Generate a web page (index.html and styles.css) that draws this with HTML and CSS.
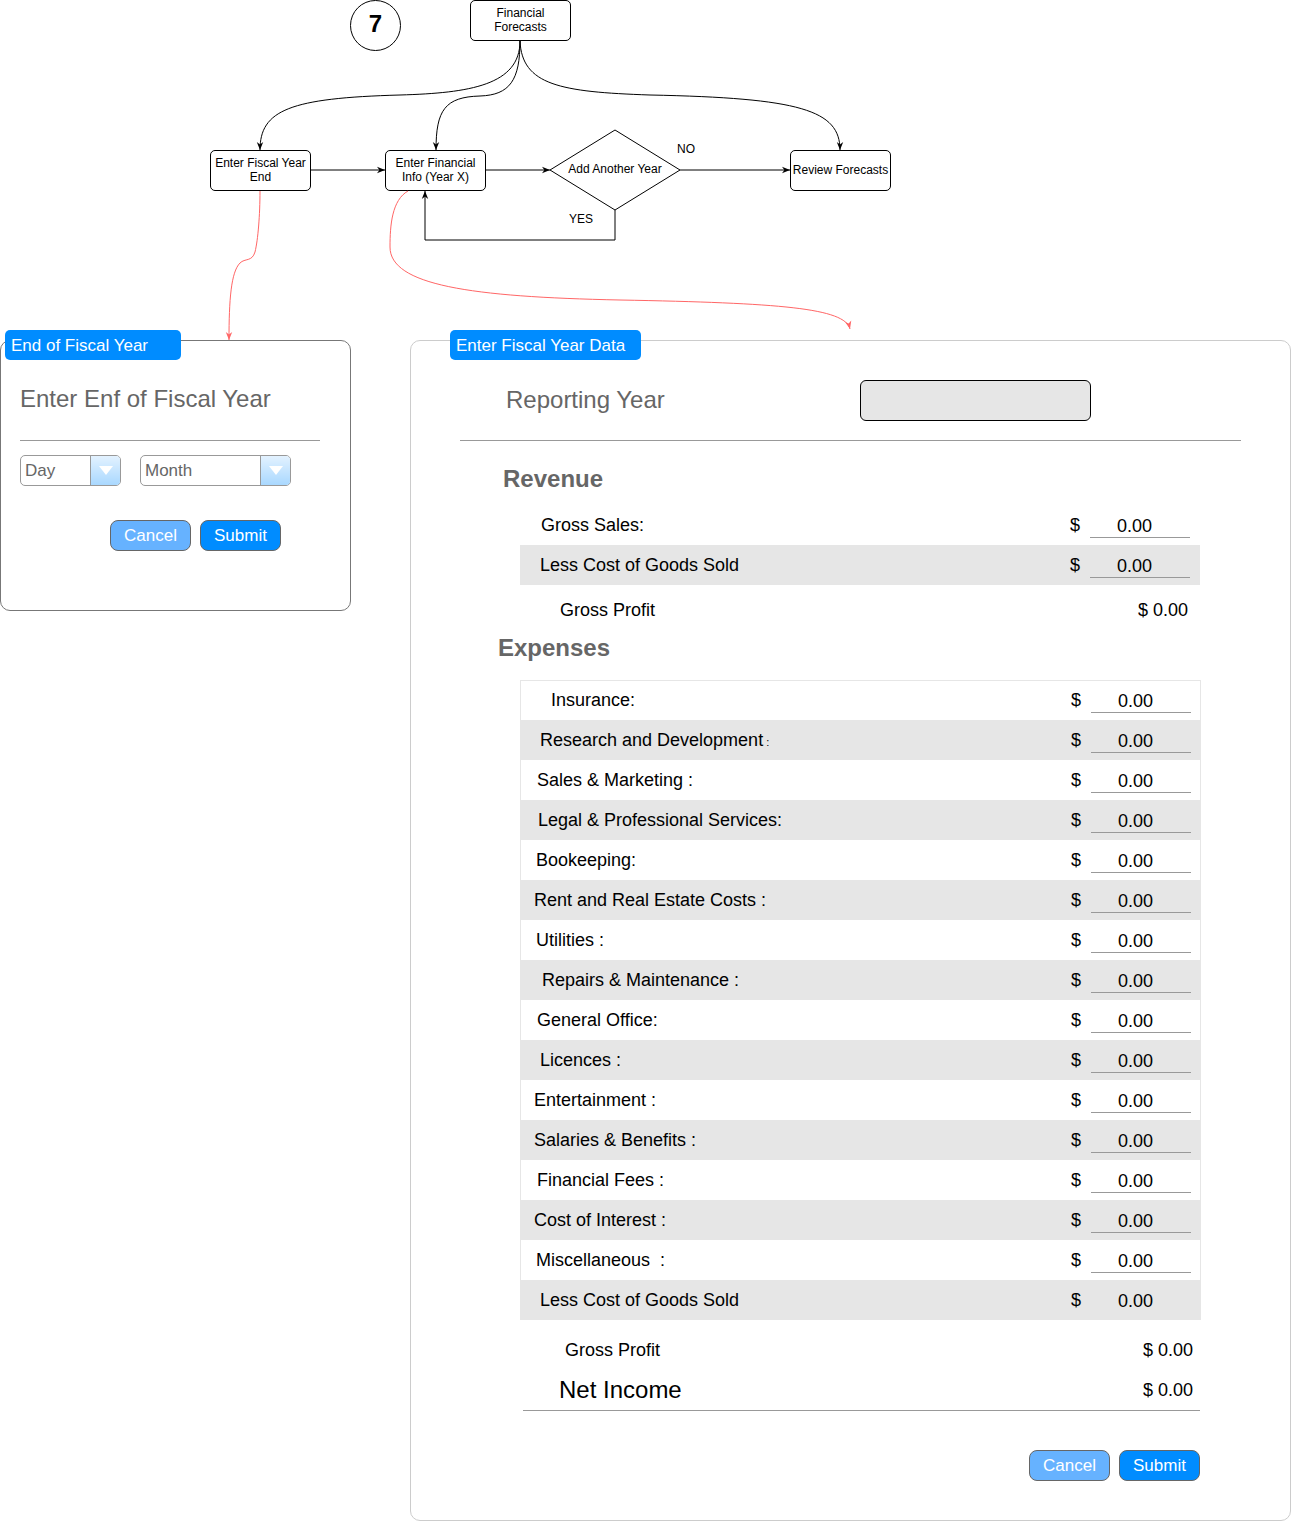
FILE: index.html
```html
<!DOCTYPE html>
<html lang="en">
<head>
<meta charset="utf-8">
<title>Financial Forecasts</title>
<link rel="stylesheet" href="styles.css">
</head>
<body>
<div class="page">
  <div class="diagram">
    <svg class="edges" width="1292" height="340" viewBox="0 0 1292 340">
      <defs>
        <marker id="ab" viewBox="0 0 10 10" refX="10" refY="5" markerWidth="8" markerHeight="8" markerUnits="userSpaceOnUse" orient="auto">
          <path d="M0,1 L10,5 L0,9 L3,5 z" fill="#000"/>
        </marker>
        <marker id="ar" viewBox="0 0 10 10" refX="10" refY="5" markerWidth="8" markerHeight="8" markerUnits="userSpaceOnUse" orient="auto">
          <path d="M0,1 L10,5 L0,9 L3,5 z" fill="#ff6666"/>
        </marker>
      </defs>
      <g fill="none" stroke="#000" stroke-width="1">
        <path d="M520,41 C520,85 470,93 400,95 C290,98 260,110 260,150" marker-end="url(#ab)"/>
        <path d="M520,41 C520,80 510,95 480,96 C445,97 436,110 436,150" marker-end="url(#ab)"/>
        <path d="M520,41 C522,85 560,92 650,95 C800,98 840,110 840,150" marker-end="url(#ab)"/>
        <path d="M311,170 L385,170" marker-end="url(#ab)"/>
        <path d="M486,170 L550,170" marker-end="url(#ab)"/>
        <path d="M680,170 L790,170" marker-end="url(#ab)"/>
        <polygon points="550,170 615,130 680,170 615,210" fill="#fff"/>
        <path d="M615,210 L615,240 L425,240 L425,191" marker-end="url(#ab)"/>
      </g>
      <g fill="none" stroke="#ff6666" stroke-width="1">
        <path d="M260,191 C260,215 258,240 255,252 C252,262 245,258 240,263 C231,272 229,300 229,340" marker-end="url(#ar)"/>
        <path d="M408,191 C392,200 390,225 390,247 C390,285 470,297 620,300 C780,303 845,308 850,329" marker-end="url(#ar)"/>
      </g>
    </svg>
    <div class="step">7</div>
    <div class="node n-ff">Financial<br>Forecasts</div>
    <div class="node n-fye">Enter Fiscal Year<br>End</div>
    <div class="node n-efi">Enter Financial<br>Info (Year X)</div>
    <div class="decision-label">Add Another Year</div>
    <div class="edge-label l-no">NO</div>
    <div class="edge-label l-yes">YES</div>
    <div class="node n-rf">Review Forecasts</div>
  </div>

  <div class="panels">
    <section class="panel panel-left">
      <div class="tab tab-left">End of Fiscal Year</div>
      <h2 class="panel-title">Enter Enf of Fiscal Year</h2>
      <div class="rule"></div>
      <div class="selects">
        <div class="select sel-day"><span class="sel-text">Day</span><span class="caret"></span></div>
        <div class="select sel-month"><span class="sel-text">Month</span><span class="caret"></span></div>
      </div>
      <div class="actions actions-left">
        <div class="btn btn-cancel">Cancel</div>
        <div class="btn btn-submit">Submit</div>
      </div>
    </section>

    <section class="panel panel-right">
      <div class="tab tab-right">Enter Fiscal Year Data</div>
      <div class="report-row">
        <h2 class="report-title">Reporting Year</h2>
        <div class="year-input"></div>
      </div>
      <div class="rule-wide"></div>

      <h3 class="section-title sec-revenue">Revenue</h3>
      <div class="rev-rows">
        <div class="row"><span class="label pad-21">Gross Sales:</span><span class="cur">$</span><span class="val">0.00</span></div>
        <div class="row alt"><span class="label pad-20">Less Cost of Goods Sold</span><span class="cur">$</span><span class="val">0.00</span></div>
        <div class="total-row"><span>Gross Profit</span><span>$ 0.00</span></div>
      </div>

      <h3 class="section-title sec-expenses">Expenses</h3>
      <div class="exp-table">
        <div class="row"><span class="label pad-31">Insurance:</span><span class="cur">$</span><span class="val">0.00</span></div>
        <div class="row alt"><span class="label pad-20">Research and Development<span class="small-colon"> :</span></span><span class="cur">$</span><span class="val">0.00</span></div>
        <div class="row"><span class="label pad-17">Sales &amp; Marketing :</span><span class="cur">$</span><span class="val">0.00</span></div>
        <div class="row alt"><span class="label pad-18">Legal &amp; Professional Services:</span><span class="cur">$</span><span class="val">0.00</span></div>
        <div class="row"><span class="label">Bookeeping:</span><span class="cur">$</span><span class="val">0.00</span></div>
        <div class="row alt"><span class="label pad-14">Rent and Real Estate Costs :</span><span class="cur">$</span><span class="val">0.00</span></div>
        <div class="row"><span class="label">Utilities :</span><span class="cur">$</span><span class="val">0.00</span></div>
        <div class="row alt"><span class="label pad-22">Repairs &amp; Maintenance :</span><span class="cur">$</span><span class="val">0.00</span></div>
        <div class="row"><span class="label pad-17">General Office:</span><span class="cur">$</span><span class="val">0.00</span></div>
        <div class="row alt"><span class="label pad-20">Licences :</span><span class="cur">$</span><span class="val">0.00</span></div>
        <div class="row"><span class="label pad-14">Entertainment :</span><span class="cur">$</span><span class="val">0.00</span></div>
        <div class="row alt"><span class="label pad-14">Salaries &amp; Benefits :</span><span class="cur">$</span><span class="val">0.00</span></div>
        <div class="row"><span class="label pad-17">Financial Fees :</span><span class="cur">$</span><span class="val">0.00</span></div>
        <div class="row alt"><span class="label pad-14">Cost of Interest :</span><span class="cur">$</span><span class="val">0.00</span></div>
        <div class="row"><span class="label">Miscellaneous &nbsp;:</span><span class="cur">$</span><span class="val">0.00</span></div>
        <div class="row alt"><span class="label pad-20">Less Cost of Goods Sold</span><span class="cur">$</span><span class="val plain">0.00</span></div>
      </div>

      <div class="summary">
        <div class="sum-row"><span class="sum-label">Gross Profit</span><span>$ 0.00</span></div>
        <div class="sum-row net"><span class="net-label">Net Income</span><span>$ 0.00</span></div>
      </div>
      <div class="rule-bottom"></div>

      <div class="actions actions-right">
        <div class="btn btn-cancel">Cancel</div>
        <div class="btn btn-submit">Submit</div>
      </div>
    </section>
  </div>
</div>
</body>
</html>
```

FILE: styles.css
```css
* { box-sizing: border-box; }

body {
  margin: 0;
  font-family: "Liberation Sans", Arial, Helvetica, sans-serif;
  color: #000;
  background: #fff;
}

.page {
  width: 1292px;
  height: 1522px;
  position: relative;
}

/* ---------- diagram ---------- */
.diagram {
  position: relative;
  height: 340px;
}

.edges {
  position: absolute;
  left: 0;
  top: 0;
  z-index: 3;
  overflow: visible;
  pointer-events: none;
}

.node {
  position: absolute;
  z-index: 2;
  width: 101px;
  height: 41px;
  padding-bottom: 2px;
  border: 1px solid #000;
  border-radius: 5px;
  background: #fff;
  display: flex;
  align-items: center;
  justify-content: center;
  text-align: center;
  font-size: 12px;
  line-height: 14px;
}

.n-ff { left: 470px; top: 0; }
.n-fye { left: 210px; top: 150px; }
.n-efi { left: 385px; top: 150px; }
.n-rf { left: 790px; top: 150px; }

.step {
  position: absolute;
  left: 350px;
  top: 0;
  width: 51px;
  height: 51px;
  padding-bottom: 3px;
  border: 1px solid #000;
  border-radius: 50%;
  display: flex;
  align-items: center;
  justify-content: center;
  font-size: 24px;
  font-weight: bold;
}

.decision-label {
  position: absolute;
  z-index: 4;
  left: 550px;
  top: 159px;
  width: 130px;
  text-align: center;
  font-size: 12px;
  line-height: 20px;
}

.edge-label {
  position: absolute;
  z-index: 4;
  font-size: 12px;
  line-height: 14px;
}

.l-no { left: 677px; top: 142px; }
.l-yes { left: 569px; top: 212px; }

/* ---------- panels ---------- */
.panels {
  display: flex;
  align-items: flex-start;
  gap: 59px;
}

.panel {
  position: relative;
  background: #fff;
  border-radius: 10px;
}

.tab {
  position: absolute;
  top: -11px;
  height: 30px;
  background: #008cff;
  border-radius: 5px;
  color: #fff;
  font-size: 17px;
  line-height: 28px;
  padding: 2px 0 0 6px;
  z-index: 2;
}

.tab-left { left: 4px; width: 176px; }
.tab-right { left: 39px; width: 191px; }

.panel-left {
  width: 351px;
  height: 271px;
  border: 1px solid #777;
  padding: 0 30px 0 19px;
}

.panel-title {
  margin: 44px 0 0;
  font-size: 24px;
  font-weight: normal;
  line-height: 28px;
  color: #666;
}

.rule {
  width: 300px;
  height: 1px;
  margin-top: 27px;
  background: #999;
}

.selects {
  display: flex;
  gap: 19px;
  margin-top: 14px;
}

.select {
  height: 31px;
  border: 1px solid #999;
  border-radius: 5px;
  display: flex;
  overflow: hidden;
  font-size: 17px;
  color: #666;
  background: #fff;
}

.sel-day { width: 101px; }
.sel-month { width: 151px; }

.sel-text {
  flex: 1;
  padding-left: 4px;
  line-height: 29px;
}

.caret {
  width: 30px;
  border-left: 1px solid #999;
  background: linear-gradient(#e3f2ff, #a9d8ff);
  display: flex;
  align-items: center;
  justify-content: center;
}

.caret::after {
  content: "";
  width: 0;
  height: 0;
  border-left: 7px solid transparent;
  border-right: 7px solid transparent;
  border-top: 9px solid #fff;
}

.actions {
  display: flex;
  gap: 9px;
}

.actions-left {
  margin-top: 34px;
  padding-left: 90px;
}

.btn {
  width: 81px;
  height: 31px;
  border: 1px solid #666;
  border-radius: 8px;
  color: #fff;
  font-size: 17px;
  line-height: 29px;
  text-align: center;
}

.btn-cancel { background: #66b2ff; }
.btn-submit { background: #008cff; }

/* ---------- right panel ---------- */
.panel-right {
  width: 881px;
  height: 1181px;
  border: 1px solid #ccc;
}

.report-row {
  display: flex;
  align-items: center;
  height: 41px;
  margin-top: 39px;
  padding-left: 95px;
}

.report-title {
  margin: 0 0 2px;
  width: 354px;
  font-size: 24px;
  font-weight: normal;
  line-height: 28px;
  color: #666;
}

.year-input {
  width: 231px;
  height: 41px;
  background: #e6e6e6;
  border: 1px solid #000;
  border-radius: 6px;
}

.rule-wide {
  width: 781px;
  height: 1px;
  margin: 19px 0 0 49px;
  background: #999;
}

.section-title {
  margin: 0;
  font-size: 24px;
  font-weight: bold;
  line-height: 28px;
  color: #666;
}

.sec-revenue { margin-top: 24px; padding-left: 92px; }
.sec-expenses { margin-top: 4px; padding-left: 87px; }

.rev-rows {
  width: 680px;
  margin: 12px 0 0 109px;
}

.exp-table {
  width: 681px;
  margin: 18px 0 0 109px;
  outline: 1px solid #e6e6e6;
  outline-offset: -1px;
}

.row {
  display: flex;
  align-items: center;
  height: 40px;
  font-size: 18px;
  padding-right: 10px;
}

.row.alt { background: #e6e6e6; }

.label {
  flex: 1;
  padding-left: 16px;
  white-space: nowrap;
}

.pad-14 { padding-left: 14px; }
.pad-17 { padding-left: 17px; }
.pad-18 { padding-left: 18px; }
.pad-20 { padding-left: 20px; }
.pad-21 { padding-left: 21px; }
.pad-22 { padding-left: 22px; }
.pad-31 { padding-left: 31px; }

.small-colon { font-size: 11px; }

.cur {
  width: 10px;
  margin-right: 10px;
}

.val {
  width: 100px;
  height: 23px;
  line-height: 22px;
  padding-right: 11px;
  text-align: center;
  border-bottom: 1px solid #999;
  margin-top: 2px;
}

.val.plain { border-bottom-color: transparent; }

.total-row {
  display: flex;
  justify-content: space-between;
  align-items: center;
  height: 45px;
  padding: 5px 12px 0 40px;
  font-size: 18px;
}

.summary {
  width: 680px;
  margin: 10px 0 0 109px;
}

.sum-row {
  display: flex;
  justify-content: space-between;
  align-items: center;
  height: 40px;
  padding: 0 7px 0 45px;
  font-size: 18px;
}

.sum-row.net { padding-left: 39px; }

.net-label {
  font-size: 24px;
}

.rule-bottom {
  width: 677px;
  height: 1px;
  margin: 0 0 0 112px;
  background: #999;
}

.actions-right {
  width: 680px;
  margin: 39px 0 0 109px;
  justify-content: flex-end;
}
```
